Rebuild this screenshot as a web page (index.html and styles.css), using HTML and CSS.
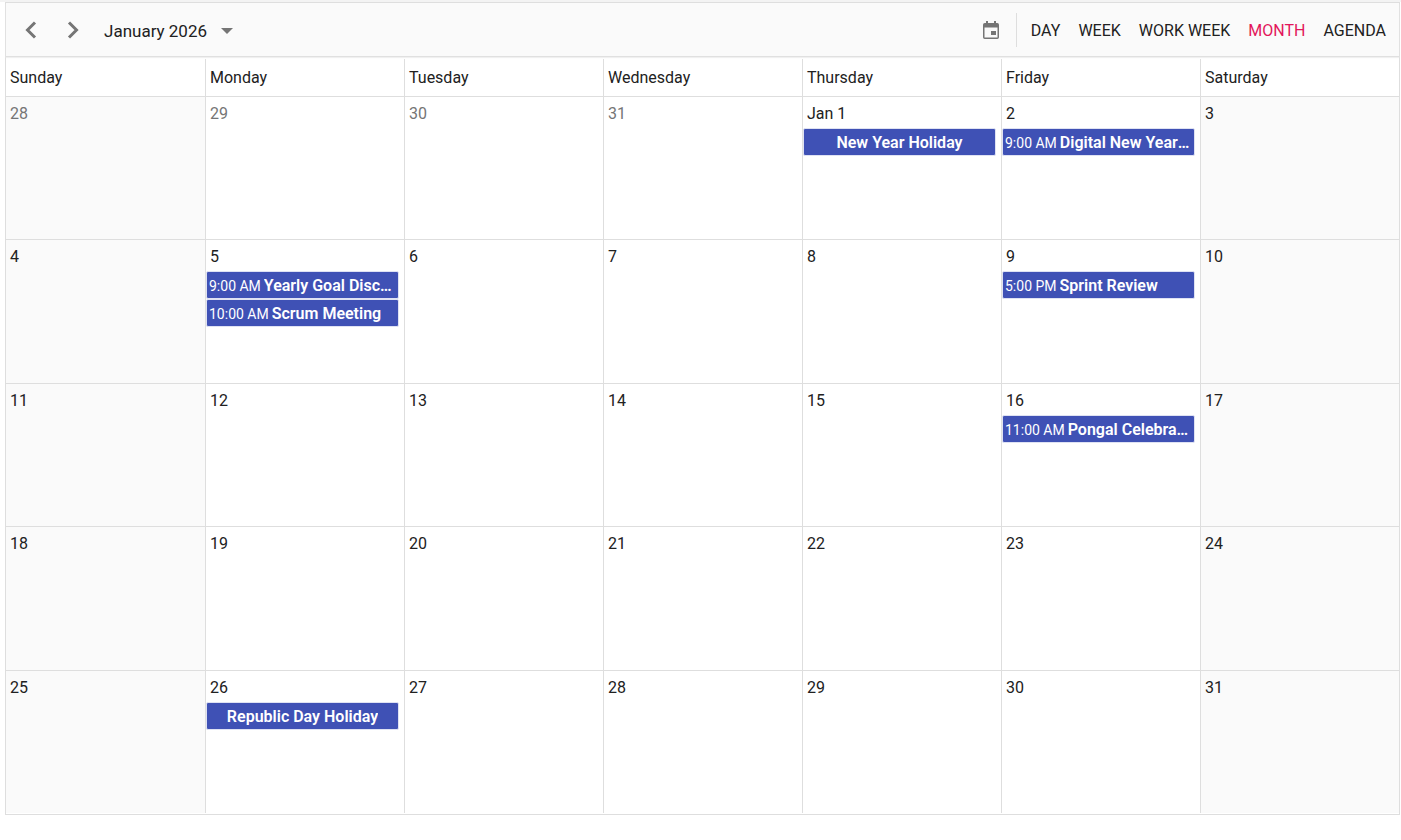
FILE: index.html
```
<!DOCTYPE html>
<html lang="en">
<head>
    <meta charset="UTF-8">
    <meta name="viewport" content="width=device-width, initial-scale=1.0">
    <title>Schedule</title>
    <link rel="stylesheet" href="styles.css">
</head>
<body>
    <div class="schedule">
        <!-- Toolbar -->
        <div class="toolbar">
            <button type="button" class="nav-btn" aria-label="Previous">
                <svg width="12" height="18" viewBox="0 0 12 18"><path d="M10 1.500 2.500 9 10 16.500" fill="none" stroke="#757575" stroke-width="3"/></svg>
            </button>
            <button type="button" class="nav-btn" aria-label="Next">
                <svg width="12" height="18" viewBox="0 0 12 18"><path d="M2 1.500 9.500 9 2 16.500" fill="none" stroke="#757575" stroke-width="3"/></svg>
            </button>
            <button type="button" class="date-btn">
                January 2026
                <svg width="12" height="6" viewBox="0 0 12 6"><path d="M0 0h12L6 6z" fill="#757575"/></svg>
            </button>
            <button type="button" class="today-btn" aria-label="Today">
                <svg width="16" height="18" viewBox="0 0 16 18"><path fill="#757575" fill-rule="evenodd" d="M3 0h2v2h6V0h2v2h1.300a1.700 1.700 0 0 1 1.700 1.700v12.600a1.700 1.700 0 0 1-1.700 1.700H1.700A1.700 1.700 0 0 1 0 16.300V3.700A1.700 1.700 0 0 1 1.700 2H3zM1.500 6.500V16.500h13V6.500zM8 10h5v4H8z"/></svg>
            </button>
            <div class="views">
                <button type="button" class="view-btn">DAY</button>
                <button type="button" class="view-btn">WEEK</button>
                <button type="button" class="view-btn">WORK WEEK</button>
                <button type="button" class="view-btn active">MONTH</button>
                <button type="button" class="view-btn">AGENDA</button>
            </div>
        </div>

        <!-- Month view -->
        <table class="day-names">
            <thead>
                <tr>
                    <th>Sunday</th>
                    <th>Monday</th>
                    <th>Tuesday</th>
                    <th>Wednesday</th>
                    <th>Thursday</th>
                    <th>Friday</th>
                    <th>Saturday</th>
                </tr>
            </thead>
        </table>
        <table class="month">
            <tbody>
                <tr>
                    <td class="weekend other">28</td>
                    <td class="other">29</td>
                    <td class="other">30</td>
                    <td class="other">31</td>
                    <td>Jan 1
                        <div class="event all-day"><span class="subject">New Year Holiday</span></div>
                    </td>
                    <td>2
                        <div class="event"><span class="time">9:00 AM</span><span class="subject">Digital New Year Celebration</span></div>
                    </td>
                    <td class="weekend">3</td>
                </tr>
                <tr>
                    <td class="weekend">4</td>
                    <td>5
                        <div class="event"><span class="time">9:00 AM</span><span class="subject">Yearly Goal Discussion</span></div>
                        <div class="event"><span class="time">10:00 AM</span><span class="subject">Scrum Meeting</span></div>
                    </td>
                    <td>6</td>
                    <td>7</td>
                    <td>8</td>
                    <td>9
                        <div class="event"><span class="time">5:00 PM</span><span class="subject">Sprint Review</span></div>
                    </td>
                    <td class="weekend">10</td>
                </tr>
                <tr>
                    <td class="weekend">11</td>
                    <td>12</td>
                    <td>13</td>
                    <td>14</td>
                    <td>15</td>
                    <td>16
                        <div class="event"><span class="time">11:00 AM</span><span class="subject">Pongal Celebration</span></div>
                    </td>
                    <td class="weekend">17</td>
                </tr>
                <tr>
                    <td class="weekend">18</td>
                    <td>19</td>
                    <td>20</td>
                    <td>21</td>
                    <td>22</td>
                    <td>23</td>
                    <td class="weekend">24</td>
                </tr>
                <tr>
                    <td class="weekend">25</td>
                    <td>26
                        <div class="event all-day"><span class="subject">Republic Day Holiday</span></div>
                    </td>
                    <td>27</td>
                    <td>28</td>
                    <td>29</td>
                    <td>30</td>
                    <td class="weekend">31</td>
                </tr>
            </tbody>
        </table>
    </div>
</body>
</html>
```
FILE: styles.css
```
* {
    box-sizing: border-box;
}
body {
    margin: 0;
    border-top: 2px solid #f3f3f3;
    background-color: #fff;
    color: #212121;
    font-family: Roboto, sans-serif;
    font-size: 16px;
}
button {
    padding: 0;
    border: none;
    background: none;
    color: inherit;
    font: inherit;
    cursor: pointer;
}
svg {
    display: block;
}
.schedule {
    margin: 0 1px 0 5px;
    border: 1px solid #dedede;
    padding-bottom: 1px;
}

/* Toolbar */
.toolbar {
    display: flex;
    align-items: center;
    height: 54px;
    padding: 0 4px;
    background-color: #fafafa;
    border-bottom: 1px solid #e0e0e0;
    box-shadow: 0 1px 1px #f0f0f0;
}
.nav-btn {
    display: flex;
    align-items: center;
    justify-content: center;
    width: 42px;
    height: 42px;
}
.date-btn {
    display: flex;
    align-items: center;
    gap: 14px;
    margin-left: 10px;
    padding-top: 2px;
    font-size: 17px;
}
.today-btn {
    margin-left: auto;
    padding: 8px 17px;
}
.views {
    display: flex;
    align-items: center;
    height: 34px;
    padding-left: 5px;
    border-left: 1px solid #dedede;
}
.view-btn {
    padding: 2px 9px 0;
}
.view-btn.active {
    color: #e3165b;
}

/* Month table */
table {
    width: 100%;
    table-layout: fixed;
    border-collapse: separate;
    border-spacing: 0;
}
.day-names {
    margin-top: 2px;
}
th {
    height: 37px;
    padding: 0 4px;
    border-left: 1px solid #dedede;
    font-weight: normal;
    text-align: left;
}
.month {
    height: calc(100vh - 123px);
}
.month tr {
    height: 20%;
}
td {
    padding: 5px 3px 0 4px;
    border-top: 1px solid #dedede;
    border-left: 1px solid #dedede;
    line-height: 24px;
    vertical-align: top;
}
th:first-child,
td:first-child {
    border-left: none;
}
.weekend {
    background-color: #fafafa;
}
.other {
    color: #757575;
}

/* Events */
.event {
    display: flex;
    align-items: baseline;
    gap: 3px;
    height: 28px;
    margin: 0 2px 0 -4px;
    padding: 0 2px;
    border: 1px solid #dfe2f3;
    border-radius: 2px;
    background-color: #3f51b5;
    color: #fff;
    line-height: 28px;
    white-space: nowrap;
}
td .event:first-of-type {
    margin-top: 2px;
}
.event.all-day {
    justify-content: center;
}
.time {
    font-size: 14px;
}
.subject {
    overflow: hidden;
    text-overflow: ellipsis;
    font-weight: 600;
}
```
